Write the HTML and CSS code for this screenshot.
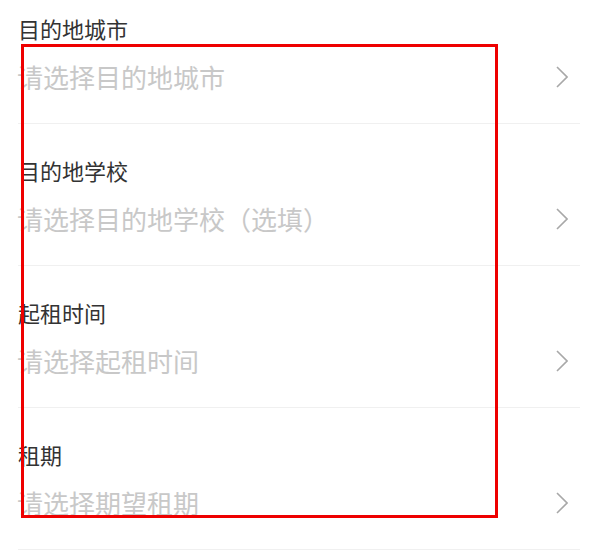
FILE: index.html
```html
<!DOCTYPE html>
<html lang="zh-CN">
<head>
    <meta charset="UTF-8">
    <meta name="viewport" content="width=device-width, initial-scale=1.0">
    <title>租房需求</title>
    <link rel="stylesheet" href="styles.css">
</head>
<body>
    <div class="form">
        <div class="field">
            <div class="label">目的地城市</div>
            <div class="picker">
                <span class="placeholder">请选择目的地城市</span>
                <svg class="arrow" width="12" height="22" viewBox="0 0 12 22"><polyline points="1,1 11,11 1,21" /></svg>
            </div>
        </div>
        <div class="field">
            <div class="label">目的地学校</div>
            <div class="picker">
                <span class="placeholder">请选择目的地学校（选填）</span>
                <svg class="arrow" width="12" height="22" viewBox="0 0 12 22"><polyline points="1,1 11,11 1,21" /></svg>
            </div>
        </div>
        <div class="field">
            <div class="label">起租时间</div>
            <div class="picker">
                <span class="placeholder">请选择起租时间</span>
                <svg class="arrow" width="12" height="22" viewBox="0 0 12 22"><polyline points="1,1 11,11 1,21" /></svg>
            </div>
        </div>
        <div class="field">
            <div class="label">租期</div>
            <div class="picker">
                <span class="placeholder">请选择期望租期</span>
                <svg class="arrow" width="12" height="22" viewBox="0 0 12 22"><polyline points="1,1 11,11 1,21" /></svg>
            </div>
        </div>
    </div>
    <!-- выделение -->
    <div class="highlight"></div>
</body>
</html>
```

FILE: styles.css
```css
body {
    font-family: "Noto Sans CJK SC", "Noto Sans", sans-serif;
    background-color: #ffffff;
    margin: 0;
    padding: 0;
}
.form {
    display: flex;
    flex-direction: column;
}
.field {
    margin: 0 13px 0 18px;
    padding: 32px 0 29px 0;
    border-bottom: 1px solid #f0f0f0;
}
.field:first-child {
    padding-top: 14px;
}
.label {
    font-size: 22px;
    line-height: 28px;
    color: #333333;
}
.picker {
    display: flex;
    align-items: center;
    justify-content: space-between;
    margin-top: 18px;
    height: 34px;
    padding-right: 12px;
}
.placeholder {
    font-size: 26px;
    line-height: 34px;
    color: #c8c8c8;
    margin-left: -1px;
}
.arrow polyline {
    fill: none;
    stroke: #a8a8a8;
    stroke-width: 1.6;
}
.highlight {
    position: absolute;
    left: 21px;
    top: 44px;
    width: 477px;
    height: 474px;
    box-sizing: border-box;
    border: 3px solid #ee0000;
}
```
